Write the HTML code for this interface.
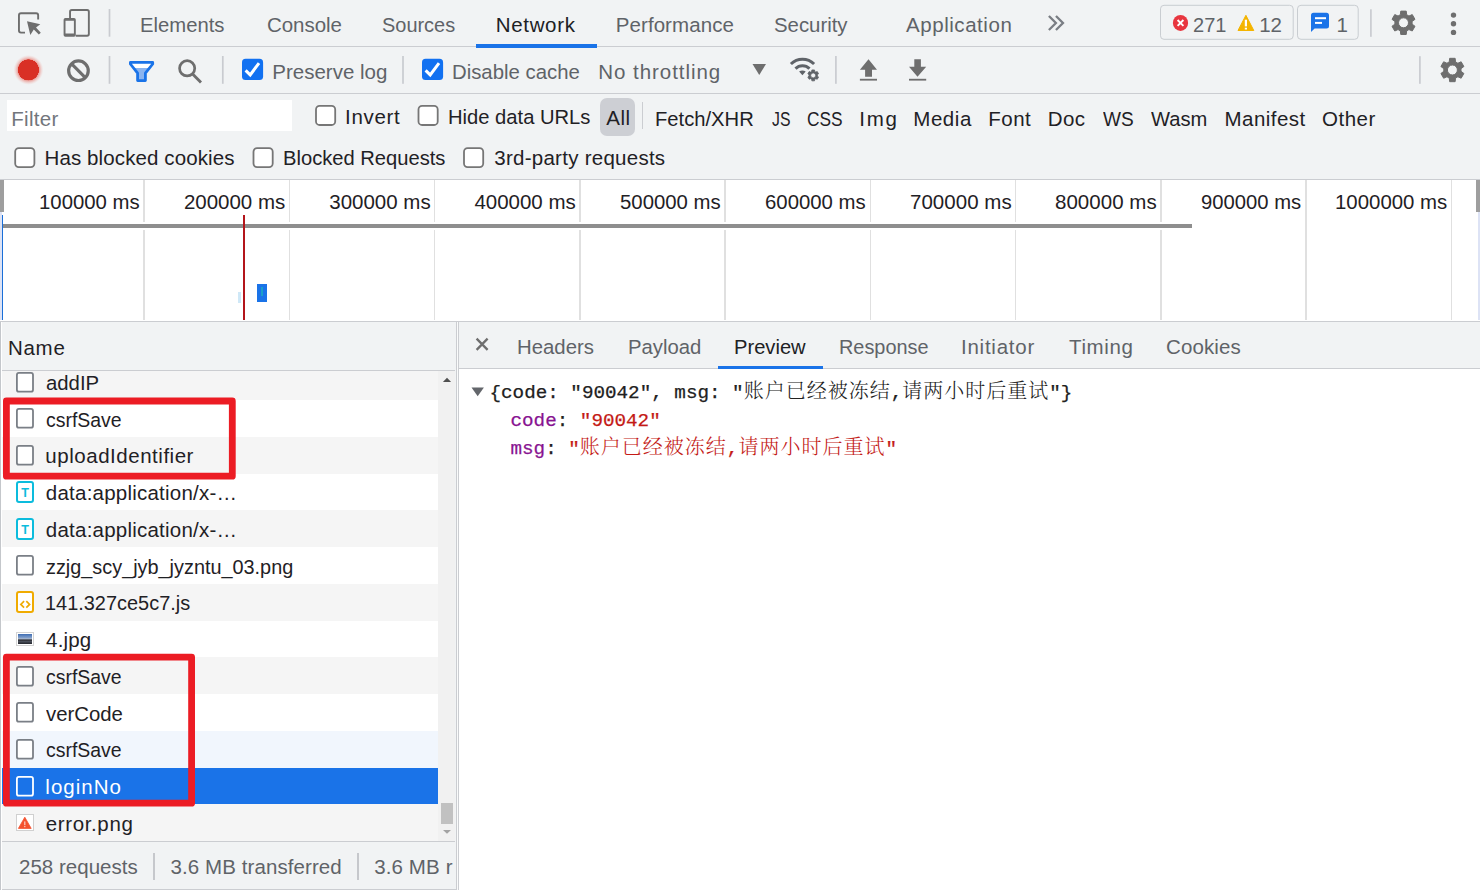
<!DOCTYPE html>
<html lang="en"><head><meta charset="utf-8"><title>DevTools - Network</title>
<style>
html,body{margin:0;padding:0}
body{width:1480px;height:890px;overflow:hidden;position:relative;background:#f1f3f4;font:20.5px/24px 'Liberation Sans',sans-serif;color:#303942}
.a,.t,svg{position:absolute}
.t{white-space:pre;display:block;height:24px;transform-origin:0 0}
.hl{height:1px;background:#cbcdd1}
.vl{width:1px;background:#cbcdd1}
.sep{width:1.5px;background:#c6c8cc}
.mono{font:19.25px/28px 'Liberation Mono',monospace;white-space:pre;color:#212121;-webkit-text-stroke:0.25px currentColor}
.cjk{font-family:'Liberation Serif','Noto Serif CJK SC',serif;font-size:20px;font-weight:300;line-height:0;letter-spacing:1px;-webkit-text-stroke:0;position:relative;top:0.2px}
</style></head><body>
<!-- top tab bar -->
<div class="a hl" style="left:0;top:46px;width:1480px"></div>
<div class="a" style="left:476px;top:44px;width:121px;height:3.5px;background:#1a73e8"></div>
<div class="a hl" style="left:0;top:93px;width:1480px"></div>
<!-- filter input -->
<div class="a" style="left:7px;top:100px;width:285px;height:31px;background:#fff"></div>
<!-- All pill -->
<div class="a" style="left:600px;top:98px;width:35px;height:37.5px;border-radius:7px;background:#cdcfd4"></div>
<div class="a" style="left:642px;top:101.5px;width:1px;height:27px;background:#cbcdd1"></div>
<!-- timeline -->
<div class="a" style="left:0;top:179px;width:1480px;height:143px;background:#fff"></div>
<div class="a hl" style="left:0;top:179px;width:1480px"></div>
<div class="a hl" style="left:0;top:321px;width:1480px"></div>
<div class="a" style="left:143.25px;top:180px;width:1.5px;height:140px;background:#e0e0e0"></div>
<div class="a" style="left:288.50px;top:180px;width:1.5px;height:140px;background:#e0e0e0"></div>
<div class="a" style="left:433.75px;top:180px;width:1.5px;height:140px;background:#e0e0e0"></div>
<div class="a" style="left:579.00px;top:180px;width:1.5px;height:140px;background:#e0e0e0"></div>
<div class="a" style="left:724.25px;top:180px;width:1.5px;height:140px;background:#e0e0e0"></div>
<div class="a" style="left:869.50px;top:180px;width:1.5px;height:140px;background:#e0e0e0"></div>
<div class="a" style="left:1014.75px;top:180px;width:1.5px;height:140px;background:#e0e0e0"></div>
<div class="a" style="left:1160.00px;top:180px;width:1.5px;height:140px;background:#e0e0e0"></div>
<div class="a" style="left:1305.25px;top:180px;width:1.5px;height:140px;background:#e0e0e0"></div>
<div class="a" style="left:1450.50px;top:180px;width:1.5px;height:140px;background:#e0e0e0"></div>
<div class="a" style="left:0;top:221.5px;width:1194px;height:8.5px;background:#fff"></div>
<div class="a" style="left:0;top:224px;width:1192px;height:4px;background:#8e8e8e"></div>
<div class="a" style="left:0;top:180px;width:4px;height:31.5px;background:#9e9e9e"></div>
<div class="a" style="left:1476px;top:180px;width:4px;height:31.5px;background:#9e9e9e"></div>
<div class="a" style="left:1477.7px;top:212px;width:2.3px;height:108px;background:#dde3f5"></div>
<div class="a" style="left:0;top:212px;width:2px;height:108px;background:#dde3f5"></div>
<div class="a" style="left:1.9px;top:215px;width:1.6px;height:105px;background:#1a6fd8"></div>
<div class="a" style="left:243px;top:215px;width:2px;height:105px;background:#b3151b"></div>
<div class="a" style="left:257.3px;top:284px;width:9.4px;height:17.6px;background:#1a73e8"></div>
<div class="a" style="left:261px;top:287px;width:1.5px;height:9px;background:#1aa0c8"></div>
<div class="a" style="left:238.4px;top:291.7px;width:2.5px;height:11px;background:#cfe8f7"></div>
<div class="a" style="left:0;top:322px;width:456px;height:568px;background:#f1f3f4"></div>
<div class="a" style="left:2px;top:371px;width:436px;height:470px;background:#fff"></div>
<div class="a" style="left:2px;top:371.00px;width:436px;height:29.00px;background:#f5f5f5"></div>
<div class="a" style="left:2px;top:436.76px;width:436px;height:36.76px;background:#f5f5f5"></div>
<div class="a" style="left:2px;top:510.28px;width:436px;height:36.76px;background:#f5f5f5"></div>
<div class="a" style="left:2px;top:583.80px;width:436px;height:36.76px;background:#f5f5f5"></div>
<div class="a" style="left:2px;top:657.32px;width:436px;height:36.76px;background:#f5f5f5"></div>
<div class="a" style="left:2px;top:730.84px;width:436px;height:36.76px;background:#f1f6fd"></div>
<div class="a" style="left:2px;top:767.60px;width:436px;height:36.76px;background:#1a73e8"></div>
<div class="a" style="left:2px;top:804.36px;width:436px;height:36.64px;background:#f5f5f5"></div>
<div class="a" style="left:438px;top:371px;width:17px;height:470px;background:#f1f1f1"></div>
<div class="a" style="left:440.5px;top:803px;width:12px;height:21px;background:#c1c1c1"></div>
<svg style="left:442px;top:376px" width="10" height="8" viewBox="0 0 10 8"><path d="M0.9 6 L5 1.7 L9.1 6 Z" fill="#505050"/></svg>
<svg style="left:442px;top:828px" width="10" height="8" viewBox="0 0 10 8"><path d="M1 2 L5 5.8 L9 2 Z" fill="#a3a3a3"/></svg>
<div class="a hl" style="left:2px;top:370px;width:453px"></div>
<div class="a hl" style="left:2px;top:841px;width:453px"></div>
<div class="a hl" style="left:0;top:889px;width:457px"></div>
<div class="a vl" style="left:0;top:322px;height:568px;background:#c4c7cb"></div>
<div class="a" style="left:1px;top:322px;width:1px;height:568px;background:#fff"></div>
<div class="a vl" style="left:456px;top:322px;height:568px"></div>
<div class="a" style="left:457px;top:322px;width:1px;height:568px;background:#fafbfb"></div>
<div class="a vl" style="left:458px;top:322px;height:568px"></div>
<div class="a sep" style="left:153px;top:852.5px;height:27px"></div>
<div class="a sep" style="left:357.3px;top:852.5px;height:27px"></div>
<div class="a" style="left:459px;top:369px;width:1021px;height:521px;background:#fff"></div>
<div class="a hl" style="left:459px;top:368px;width:1021px"></div>
<div class="a" style="left:718px;top:365.5px;width:105px;height:3.5px;background:#1a73e8"></div>
<span class="t" style="left:140.27px;top:12.90px;color:#5f6368;transform:scaleX(0.9880)">Elements</span>
<span class="t" style="left:267.00px;top:12.90px;color:#5f6368;letter-spacing:-0.042px">Console</span>
<span class="t" style="left:382.03px;top:12.90px;color:#5f6368;transform:scaleX(0.9728)">Sources</span>
<span class="t" style="left:495.75px;top:12.90px;color:#202124;letter-spacing:0.667px">Network</span>
<span class="t" style="left:615.75px;top:12.90px;color:#5f6368;letter-spacing:0.075px">Performance</span>
<span class="t" style="left:774.01px;top:12.90px;color:#5f6368;transform:scaleX(0.9932)">Security</span>
<span class="t" style="left:906.00px;top:12.90px;color:#5f6368;letter-spacing:0.550px">Application</span>
<span class="t" style="left:1193.02px;top:12.90px;color:#5f6368;transform:scaleX(0.9767)">271</span>
<span class="t" style="left:1259.25px;top:12.90px;color:#5f6368;letter-spacing:-0.250px">12</span>
<span class="t" style="left:1336.50px;top:12.90px;color:#5f6368">1</span>
<span class="t" style="left:272.25px;top:59.90px;color:#5f6368">Preserve log</span>
<span class="t" style="left:452.26px;top:59.90px;color:#5f6368;transform:scaleX(0.9921)">Disable cache</span>
<span class="t" style="left:598.25px;top:59.90px;color:#5f6368;letter-spacing:0.958px">No throttling</span>
<span class="t" style="left:11.25px;top:106.90px;color:#72767c;letter-spacing:0.300px">Filter</span>
<span class="t" style="left:345.00px;top:104.90px;color:#1f2125;letter-spacing:0.700px">Invert</span>
<span class="t" style="left:447.78px;top:104.90px;color:#1f2125;transform:scaleX(0.9842)">Hide data URLs</span>
<span class="t" style="left:606.25px;top:106.40px;color:#1f2125;letter-spacing:0.500px">All</span>
<span class="t" style="left:655.28px;top:106.90px;color:#1f2125;transform:scaleX(0.9846)">Fetch/XHR</span>
<span class="t" style="left:771.56px;top:106.90px;color:#1f2125;transform:scaleX(0.7692)">JS</span>
<span class="t" style="left:807.16px;top:106.90px;color:#1f2125;transform:scaleX(0.8447)">CSS</span>
<span class="t" style="left:859.25px;top:106.90px;color:#1f2125;letter-spacing:1.750px">Img</span>
<span class="t" style="left:913.25px;top:106.90px;color:#1f2125;letter-spacing:0.562px">Media</span>
<span class="t" style="left:988.25px;top:106.90px;color:#1f2125;letter-spacing:0.500px">Font</span>
<span class="t" style="left:1047.75px;top:106.90px;color:#1f2125;letter-spacing:0.375px">Doc</span>
<span class="t" style="left:1102.77px;top:106.90px;color:#1f2125;transform:scaleX(0.9291)">WS</span>
<span class="t" style="left:1151.25px;top:106.90px;color:#1f2125;transform:scaleX(0.9821)">Wasm</span>
<span class="t" style="left:1224.50px;top:106.90px;color:#1f2125;letter-spacing:0.464px">Manifest</span>
<span class="t" style="left:1322.00px;top:106.90px;color:#1f2125;letter-spacing:0.500px">Other</span>
<span class="t" style="left:44.50px;top:145.90px;color:#1f2125;letter-spacing:0.111px">Has blocked cookies</span>
<span class="t" style="left:282.78px;top:145.90px;color:#1f2125;transform:scaleX(0.9831)">Blocked Requests</span>
<span class="t" style="left:494.25px;top:145.90px;color:#1f2125;letter-spacing:0.265px">3rd-party requests</span>
<span class="t" style="left:39.26px;top:190.40px;color:#1f2125;transform:scaleX(0.9924)">100000 ms</span>
<span class="t" style="left:184.00px;top:190.40px;color:#1f2125;letter-spacing:-0.031px">200000 ms</span>
<span class="t" style="left:329.25px;top:190.40px;color:#1f2125">300000 ms</span>
<span class="t" style="left:474.50px;top:190.40px;color:#1f2125;letter-spacing:-0.031px">400000 ms</span>
<span class="t" style="left:620.01px;top:190.40px;color:#1f2125;transform:scaleX(0.9925)">500000 ms</span>
<span class="t" style="left:765.01px;top:190.40px;color:#1f2125;transform:scaleX(0.9925)">600000 ms</span>
<span class="t" style="left:910.00px;top:190.40px;color:#1f2125;letter-spacing:0.031px">700000 ms</span>
<span class="t" style="left:1055.00px;top:190.40px;color:#1f2125;letter-spacing:0.031px">800000 ms</span>
<span class="t" style="left:1201.01px;top:190.40px;color:#1f2125;transform:scaleX(0.9875)">900000 ms</span>
<span class="t" style="left:1334.76px;top:190.40px;color:#1f2125;transform:scaleX(0.9955)">1000000 ms</span>
<span class="t" style="left:7.95px;top:335.90px;color:#1f2125;letter-spacing:0.733px">Name</span>
<span class="t" style="left:45.86px;top:370.74px;color:#1f2125;transform:scaleX(0.9913)">addIP</span>
<span class="t" style="left:45.89px;top:407.50px;color:#1f2125;transform:scaleX(0.9487)">csrfSave</span>
<span class="t" style="left:45.35px;top:444.26px;color:#1f2125;letter-spacing:0.527px">uploadIdentifier</span>
<span class="t" style="left:45.85px;top:481.02px;color:#1f2125;letter-spacing:0.224px">data:application/x-…</span>
<span class="t" style="left:45.85px;top:517.78px;color:#1f2125;letter-spacing:0.224px">data:application/x-…</span>
<span class="t" style="left:45.87px;top:554.54px;color:#1f2125;transform:scaleX(0.9686)">zzjg_scy_jyb_jyzntu_03.png</span>
<span class="t" style="left:45.14px;top:591.30px;color:#1f2125;transform:scaleX(0.9721)">141.327ce5c7.js</span>
<span class="t" style="left:46.10px;top:628.06px;color:#1f2125;letter-spacing:0.138px">4.jpg</span>
<span class="t" style="left:45.89px;top:664.82px;color:#1f2125;transform:scaleX(0.9487)">csrfSave</span>
<span class="t" style="left:46.35px;top:701.58px;color:#1f2125;transform:scaleX(0.9928)">verCode</span>
<span class="t" style="left:45.89px;top:738.34px;color:#1f2125;transform:scaleX(0.9487)">csrfSave</span>
<span class="t" style="left:45.35px;top:775.10px;color:#fff;letter-spacing:1.017px">loginNo</span>
<span class="t" style="left:45.85px;top:811.86px;color:#1f2125;letter-spacing:0.613px">error.png</span>
<span class="t" style="left:19.00px;top:854.60px;color:#5f6368;letter-spacing:0.023px">258 requests</span>
<span class="t" style="left:170.50px;top:854.60px;color:#5f6368;letter-spacing:0.088px">3.6 MB transferred</span>
<span class="t" style="left:374.25px;top:854.60px;color:#5f6368;letter-spacing:0.107px">3.6 MB r</span>
<span class="t" style="left:517.01px;top:334.65px;color:#5f6368;transform:scaleX(0.9933)">Headers</span>
<span class="t" style="left:627.52px;top:334.65px;color:#5f6368;transform:scaleX(0.9894)">Payload</span>
<span class="t" style="left:734.03px;top:334.65px;color:#202124;transform:scaleX(0.9825)">Preview</span>
<span class="t" style="left:838.80px;top:334.65px;color:#5f6368;transform:scaleX(0.9694)">Response</span>
<span class="t" style="left:961.00px;top:334.65px;color:#5f6368;letter-spacing:0.750px">Initiator</span>
<span class="t" style="left:1069.00px;top:334.65px;color:#5f6368;letter-spacing:0.650px">Timing</span>
<span class="t" style="left:1166.00px;top:334.65px;color:#5f6368;letter-spacing:0.125px">Cookies</span>
<svg style="left:470px;top:386px" width="16" height="12" viewBox="0 0 16 12"><path d="M1.5 1.4 L13.9 1.4 L7.7 10.3 Z" fill="#63666b"/></svg>
<div class="a mono" style="left:489.5px;top:379.1px">{code: "90042", msg: "<span class="cjk">账户已经被冻结</span>,<span class="cjk">请两小时后重试</span>"}</div>
<div class="a mono" style="left:510.5px;top:407px"><span style="color:#881391">code</span>: <span style="color:#c41a16">"90042"</span></div>
<div class="a mono" style="left:510.5px;top:435px"><span style="color:#881391">msg</span>: <span style="color:#c41a16">"<span class="cjk">账户已经被冻结</span>,<span class="cjk">请两小时后重试</span>"</span></div>
<svg style="left:0;top:0" width="1480" height="180" viewBox="0 0 1480 180">
<path d="M38.15 19.6 V15.3 Q38.15 13.25 36.1 13.25 H21 Q18.95 13.25 18.95 15.3 V30.6 Q18.95 32.65 21 32.65 H25" fill="none" stroke="#6e6e6e" stroke-width="1.9"/>
<path d="M27 21.2 L40.3 24.3 L36 27.6 L40.8 32.7 L38.8 34.6 L33.8 29.6 L30.3 34.9 Z" fill="#6e6e6e"/>
<path d="M70.05 18 V11.8 Q70.05 10.05 71.8 10.05 H87.1 Q88.85 10.05 88.85 11.8 V34 Q88.85 35.75 87.1 35.75 H75.8" fill="none" stroke="#6e6e6e" stroke-width="1.9"/>
<path d="M65.4 18 H74 Q75.8 18 75.8 19.8 V34.9 Q75.8 36.7 74 36.7 H65.4 Q63.6 36.7 63.6 34.9 V19.8 Q63.6 18 65.4 18 Z M65.5 20.7 V33.4 H73.9 V20.7 Z" fill="#6e6e6e" fill-rule="evenodd"/>
<rect x="108.65" y="9" width="1.7" height="27.7" fill="#c9cbd0"/>
<rect x="108.65" y="56" width="1.7" height="27.8" fill="#c9cbd0"/>
<rect x="221.95000000000002" y="56" width="1.7" height="27.8" fill="#c9cbd0"/>
<rect x="402.15" y="56" width="1.7" height="27.8" fill="#c9cbd0"/>
<rect x="835.05" y="56" width="1.7" height="27.8" fill="#c9cbd0"/>
<rect x="1370.0500000000002" y="9.3" width="1.7" height="27.5" fill="#c9cbd0"/>
<rect x="1419.0500000000002" y="56.2" width="1.7" height="27.6" fill="#c9cbd0"/>
<circle cx="78.45" cy="70.7" r="9.8" fill="none" stroke="#6e6e6e" stroke-width="3.2"/>
<path d="M71.6 63.8 L85.3 77.6" stroke="#6e6e6e" stroke-width="3.1"/>
<defs><linearGradient id="fg" gradientUnits="userSpaceOnUse" x1="0" y1="61" x2="0" y2="82"><stop offset="0.34" stop-color="#fff"/><stop offset="0.34" stop-color="#8ab4f0"/></linearGradient></defs>
<path d="M130.4 62.4 H152.7 V64 L145.4 73.2 V80.6 H137.6 V73.2 L130.4 64 Z" fill="url(#fg)" stroke="#1a73e8" stroke-width="2.8" stroke-linejoin="round"/>
<circle cx="187.15" cy="68.3" r="7.6" fill="none" stroke="#6e6e6e" stroke-width="2.7"/>
<path d="M192.6 73.9 L201 82.4" stroke="#6e6e6e" stroke-width="2.9"/>
<path d="M752.5 64.1 H766 L759.25 75.1 Z" fill="#6e6e6e"/>
<path d="M790.90 64.00 A16.4 16.4 0 0 1 814.10 64.00" fill="none" stroke="#5f6368" stroke-width="3"/>
<path d="M795.50 68.60 A9.9 9.9 0 0 1 809.50 68.60" fill="none" stroke="#5f6368" stroke-width="3"/>
<path d="M799.1 71.4 Q802.4 69.6 805.7 71.4 L802.4 75.3 Z" fill="#5f6368"/>
<circle cx="813.2" cy="75.4" r="7.2" fill="#f1f3f4"/>
<path d="M814.75 71.49 L814.51 69.95 L811.89 69.95 L811.65 71.49 L810.59 72.11 L809.14 71.55 L807.83 73.81 L809.05 74.79 L809.05 76.01 L807.83 76.99 L809.14 79.25 L810.59 78.69 L811.65 79.31 L811.89 80.85 L814.51 80.85 L814.75 79.31 L815.81 78.69 L817.26 79.25 L818.57 76.99 L817.35 76.01 L817.35 74.79 L818.57 73.81 L817.26 71.55 L815.81 72.11 Z M815.70 75.40 A2.5 2.5 0 1 0 810.70 75.40 A2.5 2.5 0 1 0 815.70 75.40 Z" fill="#5f6368" fill-rule="evenodd" stroke="#5f6368" stroke-width="0.8" stroke-linejoin="round"/>
<path d="M1406.63 14.68 L1406.24 11.12 L1400.76 11.12 L1400.37 14.68 L1398.04 16.03 L1394.75 14.59 L1392.01 19.33 L1394.90 21.46 L1394.90 24.14 L1392.01 26.27 L1394.75 31.01 L1398.04 29.57 L1400.37 30.92 L1400.76 34.48 L1406.24 34.48 L1406.63 30.92 L1408.96 29.57 L1412.25 31.01 L1414.99 26.27 L1412.10 24.14 L1412.10 21.46 L1414.99 19.33 L1412.25 14.59 L1408.96 16.03 Z M1408.50 22.80 A5.0 5.0 0 1 0 1398.50 22.80 A5.0 5.0 0 1 0 1408.50 22.80 Z" fill="#6e6e6e" fill-rule="evenodd" stroke="#6e6e6e" stroke-width="1.0" stroke-linejoin="round"/>
<path d="M1455.53 61.88 L1455.14 58.32 L1449.66 58.32 L1449.27 61.88 L1446.94 63.23 L1443.65 61.79 L1440.91 66.53 L1443.80 68.66 L1443.80 71.34 L1440.91 73.47 L1443.65 78.21 L1446.94 76.77 L1449.27 78.12 L1449.66 81.68 L1455.14 81.68 L1455.53 78.12 L1457.86 76.77 L1461.15 78.21 L1463.89 73.47 L1461.00 71.34 L1461.00 68.66 L1463.89 66.53 L1461.15 61.79 L1457.86 63.23 Z M1457.40 70.00 A5.0 5.0 0 1 0 1447.40 70.00 A5.0 5.0 0 1 0 1457.40 70.00 Z" fill="#6e6e6e" fill-rule="evenodd" stroke="#6e6e6e" stroke-width="1.0" stroke-linejoin="round"/>
<path d="M868.5 59.3 L877 69.7 H872 V76.8 H865.1 V69.7 H859.9 Z" fill="#6e6e6e"/><rect x="859.9" y="78.8" width="17.1" height="1.8" fill="#6e6e6e"/>
<path d="M914.3 59.3 H920.9 V66.7 H926.2 L917.5 76.8 L909 66.7 H914.3 Z" fill="#6e6e6e"/><rect x="909" y="78.8" width="17.2" height="1.8" fill="#6e6e6e"/>
<path d="M1049.70 16.8 L1055.90 23 L1049.70 29.2" fill="none" stroke="#7a7e84" stroke-width="2.3" stroke-linecap="square" stroke-linejoin="miter"/>
<path d="M1056.76 16.8 L1062.96 23 L1056.76 29.2" fill="none" stroke="#7a7e84" stroke-width="2.3" stroke-linecap="square" stroke-linejoin="miter"/>
<rect x="1160.5" y="5.3" width="132.7" height="34" rx="3.5" fill="none" stroke="#c9cdd1" stroke-width="1"/>
<rect x="1297.5" y="5.3" width="60.7" height="34" rx="3.5" fill="none" stroke="#c9cdd1" stroke-width="1"/>
<ellipse cx="1180.5" cy="22.9" rx="7.6" ry="8" fill="#e8363f"/>
<path d="M1177.6 20 L1183.4 25.8 M1183.4 20 L1177.6 25.8" stroke="#fff" stroke-width="1.9"/>
<path d="M1245.9 15.3 L1253.8 30.5 H1238 Z" fill="#f4b400" stroke="#f4b400" stroke-width="1" stroke-linejoin="round"/>
<rect x="1244.8" y="19.7" width="2.2" height="6.7" fill="#fff"/><rect x="1244.8" y="27.7" width="2.2" height="1.8" fill="#fff"/>
<path d="M1313.5 12.8 H1326.5 Q1329 12.8 1329 15.3 V26.1 Q1329 28.6 1326.5 28.6 H1314.6 L1311 32.1 V15.3 Q1311 12.8 1313.5 12.8 Z" fill="#1a73e8"/>
<rect x="1315" y="17.2" width="11" height="2" fill="#fff"/><rect x="1315" y="21.9" width="7" height="2" fill="#fff"/>
<circle cx="1453.5" cy="15.1" r="2.7" fill="#6e6e6e"/>
<circle cx="1453.5" cy="23.8" r="2.7" fill="#6e6e6e"/>
<circle cx="1453.5" cy="32.4" r="2.7" fill="#6e6e6e"/>
<defs><radialGradient id="rg" gradientUnits="userSpaceOnUse" cx="28.45" cy="69.9" r="15"><stop offset="0.69" stop-color="#d93025"/><stop offset="0.71" stop-color="#e8837a" stop-opacity="0.75"/><stop offset="1" stop-color="#f1c4c0" stop-opacity="0"/></radialGradient></defs>
<circle cx="28.45" cy="69.9" r="15" fill="url(#rg)"/>
<rect x="242" y="58.8" width="21.1" height="21.3" rx="3.6" fill="#1271f1"/>
<path d="M245.6 70.4 L250.2 74.9 L259 63.1" fill="none" stroke="#fff" stroke-width="3"/>
<rect x="422" y="58.8" width="21.1" height="21.3" rx="3.6" fill="#1271f1"/>
<path d="M425.6 70.4 L430.2 74.9 L439 63.1" fill="none" stroke="#fff" stroke-width="3"/>
<rect x="316.0" y="105.9" width="19.2" height="19.1" rx="3.6" fill="#fff" stroke="#767676" stroke-width="1.8"/>
<rect x="418.5" y="105.9" width="19.2" height="19.1" rx="3.6" fill="#fff" stroke="#767676" stroke-width="1.8"/>
<rect x="15.200000000000001" y="148.1" width="19.2" height="19.1" rx="3.6" fill="#fff" stroke="#767676" stroke-width="1.8"/>
<rect x="253.5" y="148.1" width="19.2" height="19.1" rx="3.6" fill="#fff" stroke="#767676" stroke-width="1.8"/>
<rect x="464.0" y="148.1" width="19.2" height="19.1" rx="3.6" fill="#fff" stroke="#767676" stroke-width="1.8"/>
</svg>
<svg style="left:470px;top:332px" width="24" height="24" viewBox="470 332 24 24"><path d="M476.6 338.6 L487.6 349.9 M487.6 338.6 L476.6 349.9" stroke="#6e6e6e" stroke-width="2.3"/></svg>
<svg style="left:16.1px;top:371.54px" width="18" height="21" viewBox="0 0 18 21"><rect x="0.9" y="0.9" width="16.1" height="18.8" rx="2" fill="#fff" stroke="#7a7f86" stroke-width="1.8"/></svg>
<svg style="left:16.1px;top:408.3px" width="18" height="21" viewBox="0 0 18 21"><rect x="0.9" y="0.9" width="16.1" height="18.8" rx="2" fill="#fff" stroke="#7a7f86" stroke-width="1.8"/></svg>
<svg style="left:16.1px;top:445.06px" width="18" height="21" viewBox="0 0 18 21"><rect x="0.9" y="0.9" width="16.1" height="18.8" rx="2" fill="#fff" stroke="#7a7f86" stroke-width="1.8"/></svg>
<div class="a" style="left:16.1px;top:481.22px;width:17.9px;height:21.6px;box-sizing:border-box;border:2px solid #0cbcdd;border-radius:3px;background:#fff"></div>
<svg style="left:16px;top:481.22px" width="18" height="22" viewBox="0 0 18 22"><text x="9.05" y="15.6" text-anchor="middle" font-family="Liberation Sans,sans-serif" font-weight="bold" font-size="12.6" fill="#0cbcdd">T</text></svg>
<div class="a" style="left:16.1px;top:517.98px;width:17.9px;height:21.6px;box-sizing:border-box;border:2px solid #0cbcdd;border-radius:3px;background:#fff"></div>
<svg style="left:16px;top:517.98px" width="18" height="22" viewBox="0 0 18 22"><text x="9.05" y="15.6" text-anchor="middle" font-family="Liberation Sans,sans-serif" font-weight="bold" font-size="12.6" fill="#0cbcdd">T</text></svg>
<svg style="left:16.1px;top:555.34px" width="18" height="21" viewBox="0 0 18 21"><rect x="0.9" y="0.9" width="16.1" height="18.8" rx="2" fill="#fff" stroke="#7a7f86" stroke-width="1.8"/></svg>
<div class="a" style="left:16.1px;top:591.20px;width:17.9px;height:21.8px;box-sizing:border-box;border:2px solid #f0ab00;border-radius:3px;background:#fff"></div>
<svg style="left:16px;top:591.20px" width="18" height="22" viewBox="0 0 18 22"><path d="M8.1 10.2 L4.8 13.4 L8.1 16.6 M10.3 10.2 L13.6 13.4 L10.3 16.6" fill="none" stroke="#f0ab00" stroke-width="1.7"/></svg>
<div class="a" style="left:16.1px;top:631.96px;width:17.6px;height:13.7px;box-sizing:border-box;border:1px solid #d4d4d4;background:#fff;padding:1px"><div style="width:100%;height:100%;background:linear-gradient(#3f6db3 0%,#7d9cc9 35%,#a9b7cc 48%,#2b2b2f 60%,#4a4f5a 75%,#23252b 100%)"></div></div>
<svg style="left:16.1px;top:665.62px" width="18" height="21" viewBox="0 0 18 21"><rect x="0.9" y="0.9" width="16.1" height="18.8" rx="2" fill="#fff" stroke="#7a7f86" stroke-width="1.8"/></svg>
<svg style="left:16.1px;top:702.38px" width="18" height="21" viewBox="0 0 18 21"><rect x="0.9" y="0.9" width="16.1" height="18.8" rx="2" fill="#fff" stroke="#7a7f86" stroke-width="1.8"/></svg>
<svg style="left:16.1px;top:739.14px" width="18" height="21" viewBox="0 0 18 21"><rect x="0.9" y="0.9" width="16.1" height="18.8" rx="2" fill="#fff" stroke="#7a7f86" stroke-width="1.8"/></svg>
<svg style="left:16.1px;top:775.9px" width="18" height="21" viewBox="0 0 18 21"><rect x="0.9" y="0.9" width="16.1" height="18.8" rx="2" fill="#1a73e8" stroke="#fff" stroke-width="1.8"/></svg>
<div class="a" style="left:16.1px;top:814.16px;width:17.6px;height:16.6px;box-sizing:border-box;border:1px solid #d0d0d0;background:#fff"></div>
<svg style="left:16.1px;top:814.16px" width="17.6" height="16.6" viewBox="0 0 17.6 16.6"><path d="M8.8 3.2 L15.2 14.4 H2.4 Z" fill="#f4512e" stroke="#f4512e" stroke-width="0.8" stroke-linejoin="round"/><rect x="8.2" y="7.4" width="1.2" height="3.8" fill="#fbd0c5"/><rect x="8.2" y="12" width="1.2" height="1.2" fill="#fbd0c5"/></svg>
<svg style="left:0;top:390px" width="240" height="420" viewBox="0 390 240 420"><rect x="6.4" y="401" width="225.9" height="75.2" fill="none" stroke="#ec1c24" stroke-width="6.8" stroke-linejoin="round"/><rect x="6.4" y="657.1" width="185.2" height="146.1" fill="none" stroke="#ec1c24" stroke-width="6.8" stroke-linejoin="round"/></svg>
</body></html>
